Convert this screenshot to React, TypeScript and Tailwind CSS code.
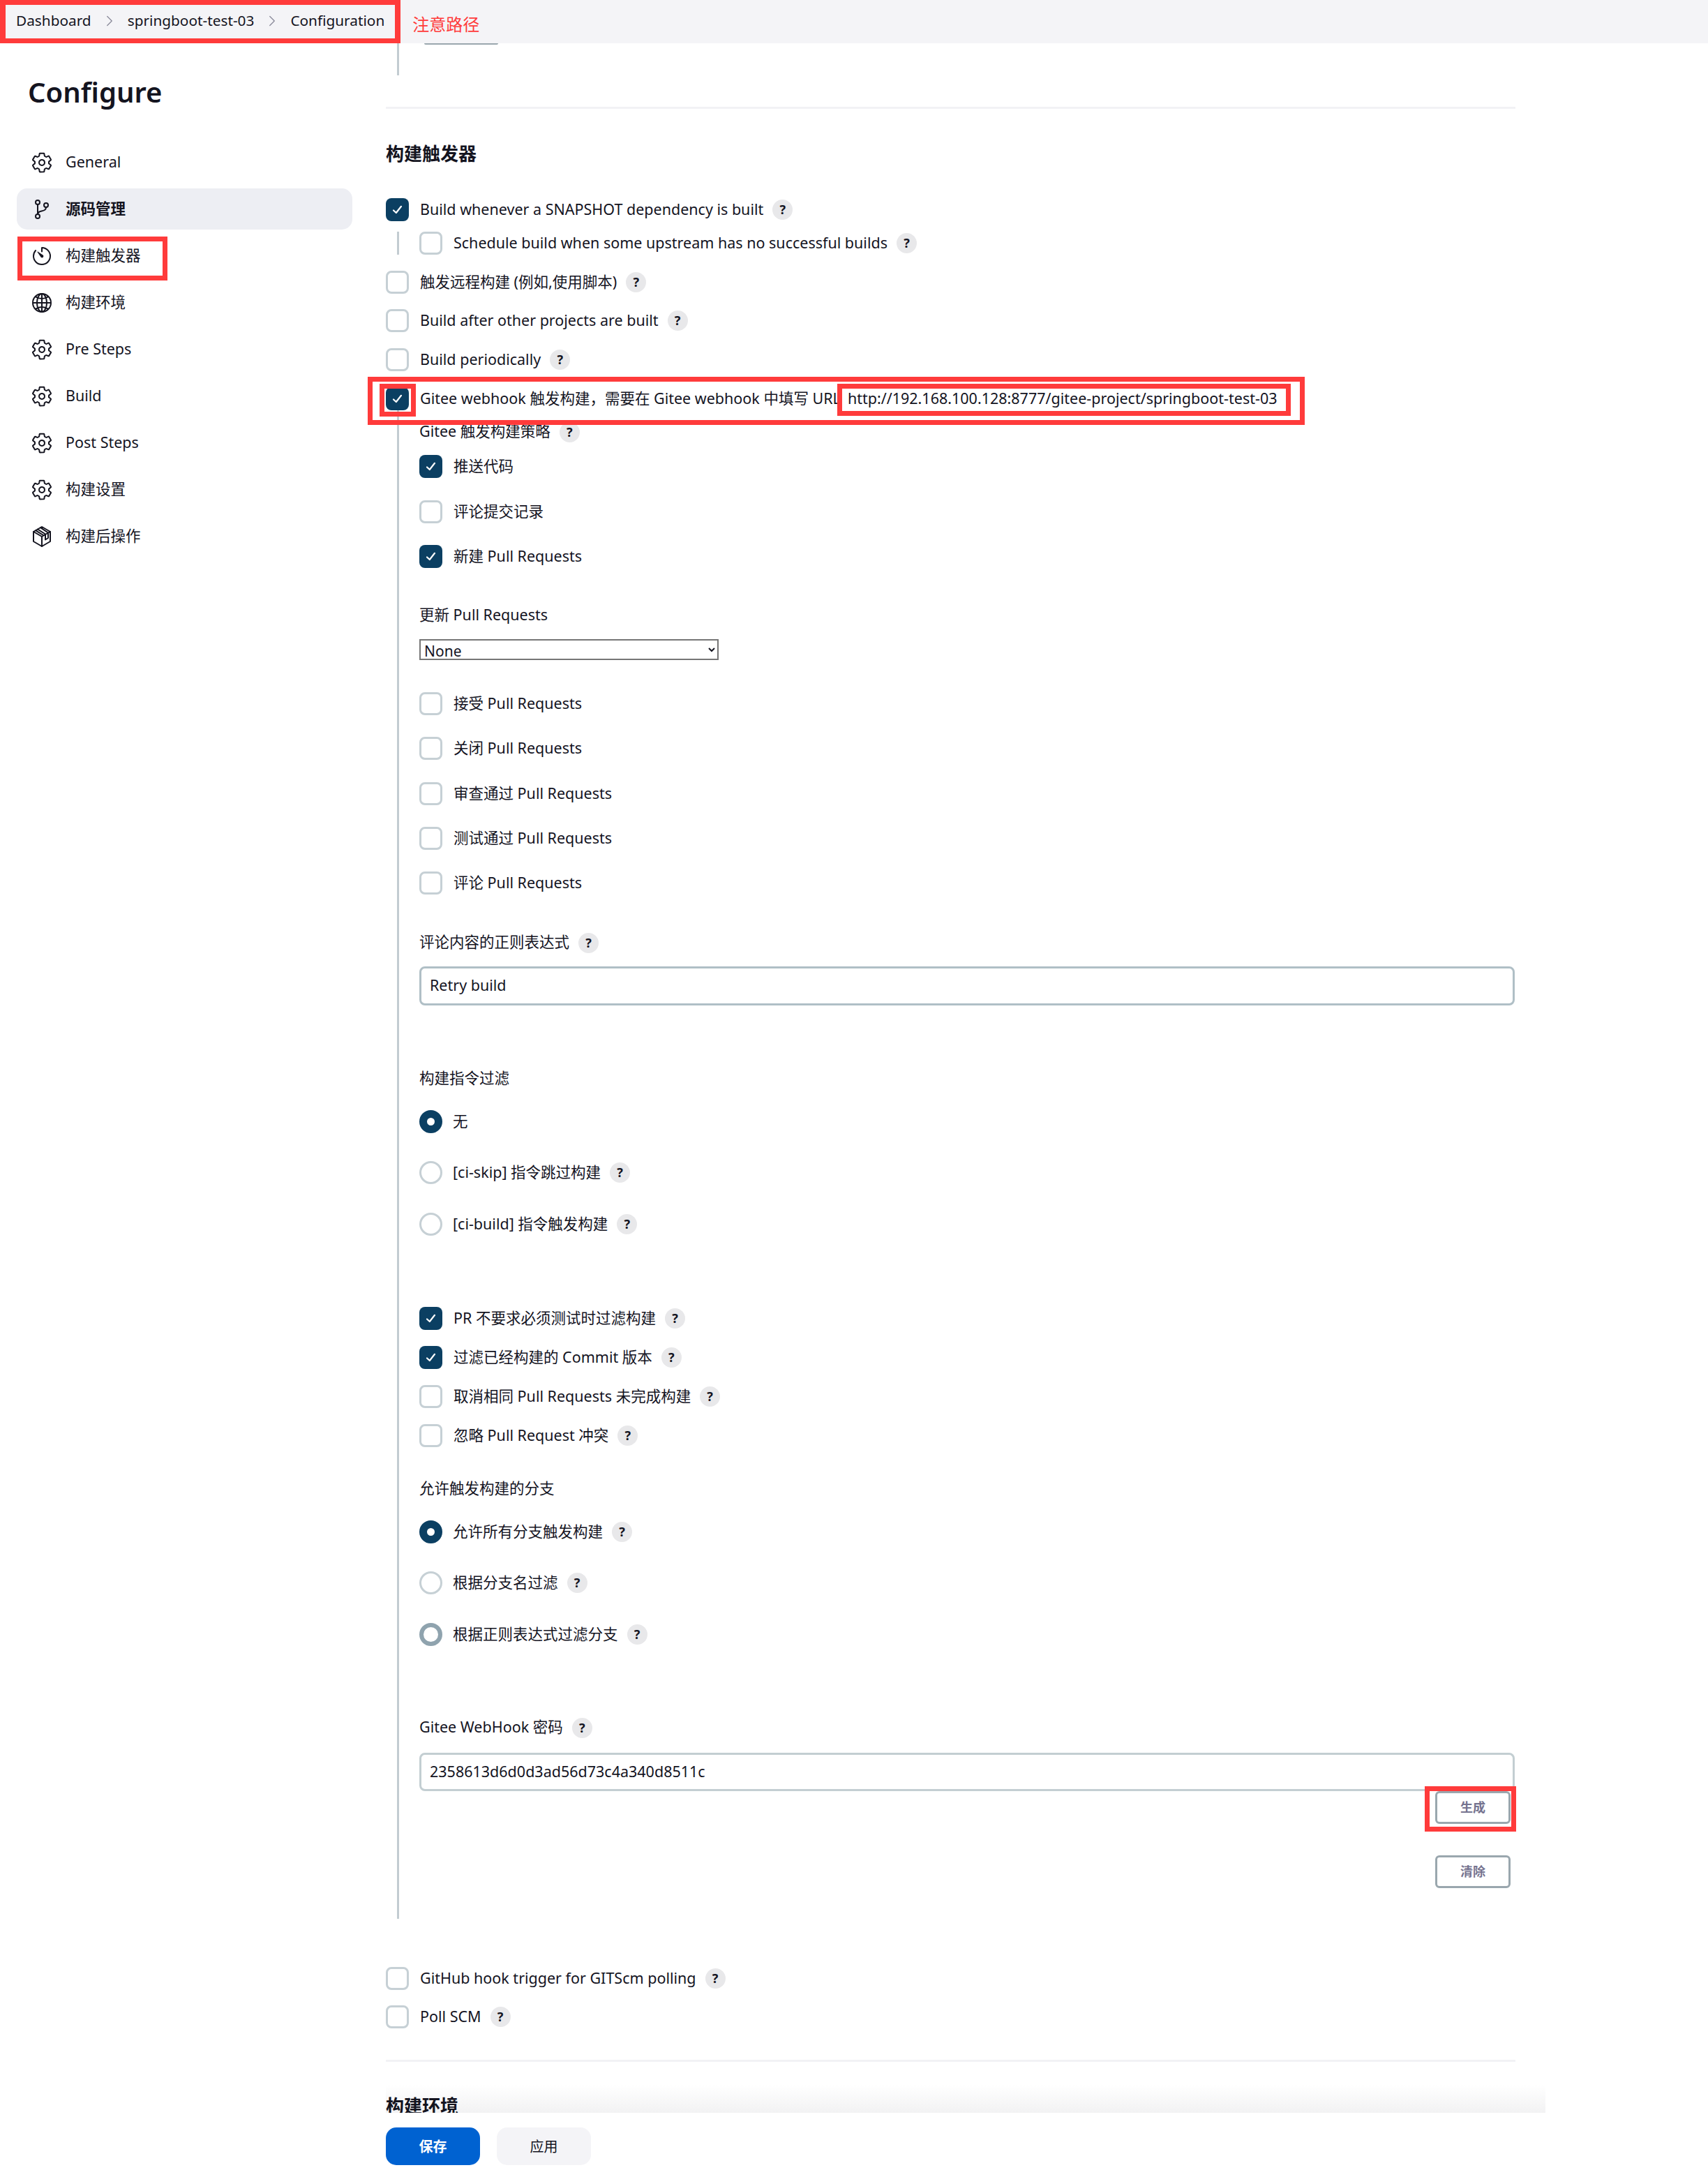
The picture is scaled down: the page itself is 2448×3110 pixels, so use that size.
import React from "react";
import { ChevronRight } from "lucide-react";
import {
  IoGitBranchOutline,
  IoGlobeOutline,
  IoSettingsOutline,
  IoTimerOutline,
} from "react-icons/io5";

function BoxIcon({ size, className }: { size?: number; className?: string }) {
  return (
    <svg width={size} height={size} viewBox="0 0 32 32" fill="none" stroke="currentColor" strokeWidth="2" strokeLinejoin="round" strokeLinecap="round" className={className}>
      <path d="M16 2 L28 9 V23 L16 30 L4 23 V9 Z" />
      <path d="M4 9 L16 16 L28 9 M16 16 V30" />
      <path d="M10 5.5 L21 12.5 V20.5 L25 18 V10.5 L14 3.2" />
      <path d="M7 7.2 L18 14" />
    </svg>
  );
}

const navItems: { label: string; icon: React.ComponentType<any>; active?: boolean }[] = [
  { label: "General", icon: IoSettingsOutline },
  { label: "源码管理", icon: IoGitBranchOutline, active: true },
  { label: "构建触发器", icon: IoTimerOutline },
  { label: "构建环境", icon: IoGlobeOutline },
  { label: "Pre Steps", icon: IoSettingsOutline },
  { label: "Build", icon: IoSettingsOutline },
  { label: "Post Steps", icon: IoSettingsOutline },
  { label: "构建设置", icon: IoSettingsOutline },
  { label: "构建后操作", icon: BoxIcon },
];

function Help() {
  return (
    <span className="ml-[13px] flex h-[29px] w-[29px] shrink-0 items-center justify-center rounded-full bg-[#e8e8ea] text-[18px] font-bold text-[#14141f]">
      ?
    </span>
  );
}

function Tick() {
  return (
    <span className="flex h-[33px] w-[33px] shrink-0 items-center justify-center rounded-[8px] bg-[#0b3f62]">
      <svg width="17" height="17" viewBox="0 0 17 17" fill="none">
        <path d="M3 9.5 L6.8 13 L14 3.8" stroke="white" strokeWidth="2.2" strokeLinecap="round" strokeLinejoin="round" />
      </svg>
    </span>
  );
}

function Check({ label, on, help, className = "" }: { label: string; on?: boolean; help?: boolean; className?: string }) {
  return (
    <div className={`flex h-[33px] items-center ${className}`}>
      {on ? <Tick /> : <span className="h-[33px] w-[33px] shrink-0 rounded-[8px] border-[3px] border-[#c6d0d5] bg-white" />}
      <span className="ml-[16px] whitespace-nowrap pb-px">{label}</span>
      {help && <Help />}
    </div>
  );
}

function Radio({ label, on, hover, help, className = "" }: { label: string; on?: boolean; hover?: boolean; help?: boolean; className?: string }) {
  const ring = on
    ? "border-[11px] border-[#0b3f62]"
    : hover
      ? "border-[6px] border-[#8fa3ae]"
      : "border-[3px] border-[#c6d0d5]";
  return (
    <div className={`flex h-[33px] items-center ${className}`}>
      <span className={`h-[33px] w-[33px] shrink-0 rounded-full bg-white ${ring}`} />
      <span className="ml-[15px] whitespace-nowrap pb-px">{label}</span>
      {help && <Help />}
    </div>
  );
}

function FieldLabel({ label, help, className = "" }: { label: string; help?: boolean; className?: string }) {
  return (
    <div className={`flex h-[30px] items-center ${className}`}>
      <span className="whitespace-nowrap pb-px">{label}</span>
      {help && <Help />}
    </div>
  );
}

function TextBox({ value, border, className = "" }: { value: string; border: string; className?: string }) {
  return (
    <div className={`flex w-[1570px] items-center rounded-[8px] border-[3px] bg-white pb-px pl-[12px] ${border} ${className}`}>
      {value}
    </div>
  );
}

function OutlineButton({ label, className = "" }: { label: string; className?: string }) {
  return (
    <div className={`ml-auto mr-[6px] flex h-[47px] w-[108px] items-center justify-center rounded-[6px] border-[3px] border-[#9aa7ae] bg-white text-[18px] font-bold text-[#75738f] ${className}`}>
      {label}
    </div>
  );
}

function Mark({ className }: { className: string }) {
  return <div className={`pointer-events-none absolute border-[#ff3b3b] ${className}`} />;
}

export default function App() {
  return (
    <div className="relative flex h-[3110px] w-[2448px] flex-col overflow-hidden bg-white font-['Noto_Sans','Noto_Sans_CJK_SC',sans-serif] text-[21.5px] text-[#14141f]">
      {/* breadcrumb */}
      <header className="flex h-[62px] shrink-0 items-center bg-[#f4f4f7] pb-[3px] pl-[23px] text-[20.8px]">
        <span>Dashboard</span>
        <ChevronRight size={26} strokeWidth={1.2} className="mx-[13px] text-[#8a8a99]" />
        <span>springboot-test-03</span>
        <ChevronRight size={26} strokeWidth={1.2} className="mx-[13px] text-[#8a8a99]" />
        <span>Configuration</span>
        <span className="ml-[40px] mt-[10px] text-[24px] text-[#ff3b3b]">注意路径</span>
      </header>

      <div className="relative flex min-h-0 flex-1">
        <aside className="w-[553px] shrink-0 pl-[24px]">
          <h1 className="ml-[16px] mt-[40px] text-[40px] font-semibold leading-[60px]">Configure</h1>
          <nav className="mt-[41px] w-[481px]">
            {navItems.map(({ label, icon: Icon, active }) => (
              <div
                key={label}
                className={`mb-[8px] flex h-[59px] items-center rounded-[15px] pl-[20px] ${active ? "bg-[#edeef3] font-bold" : ""}`}
              >
                <Icon size={32} strokeWidth={1.5} className="shrink-0 text-[#14141f]" />
                <span className="ml-[18px]">{label}</span>
              </div>
            ))}
          </nav>
        </aside>

        <main className="relative min-w-0 flex-1 overflow-hidden">
          <div className="pointer-events-none absolute bottom-0 left-[-20px] h-[40px] w-[1682px] bg-gradient-to-b from-transparent to-[#f2f2f3]" />
          <div className="relative w-[1619px]">
            <div className="ml-[16px] h-[46px] border-l-[3px] border-[#c3ccd1] pl-[36px]">
              <div className="h-[2px] w-[106px] rounded-b bg-[#9aa7ae]" />
            </div>
            <div className="mt-[45px] h-[3px] bg-[#f2f2f5]" />
            <h2 className="mt-[44px] text-[26px] font-bold leading-[40px]">构建触发器</h2>

            <Check className="mt-[44px]" label="Build whenever a SNAPSHOT dependency is built" on help />
            <div className="ml-[16px] mt-[15px] border-l-[3px] border-[#c3ccd1] pl-[29px]">
              <Check label="Schedule build when some upstream has no successful builds" help />
            </div>
            <Check className="mt-[23px]" label="触发远程构建 (例如,使用脚本)" help />
            <Check className="mt-[22px]" label="Build after other projects are built" help />
            <Check className="mt-[23px]" label="Build periodically" help />

            <div className="mt-[23px] flex h-[33px] items-center">
              <Tick />
              <span className="ml-[16px] whitespace-nowrap pb-px">Gitee webhook 触发构建，需要在 Gitee webhook 中填写 URL</span>
              <span className="ml-[10px] whitespace-nowrap pb-px">http://192.168.100.128:8777/gitee-project/springboot-test-03</span>
            </div>

            <div className="ml-[16px] border-l-[3px] border-[#c3ccd1] pb-[44px] pl-[29px]">
              <FieldLabel className="box-content pt-[16px]" label="Gitee 触发构建策略" help />
              <Check className="mt-[18px]" label="推送代码" on />
              <Check className="mt-[32px]" label="评论提交记录" />
              <Check className="mt-[31px]" label="新建 Pull Requests" on />
              <FieldLabel className="mt-[53px]" label="更新 Pull Requests" />
              <select className="mt-[19px] block h-[30px] w-[429px] border-2 border-[#767676] bg-white py-0 pl-[1px] text-[21px] leading-none">
                <option>None</option>
              </select>
              <Check className="mt-[46px]" label="接受 Pull Requests" />
              <Check className="mt-[31px]" label="关闭 Pull Requests" />
              <Check className="mt-[32px]" label="审查通过 Pull Requests" />
              <Check className="mt-[31px]" label="测试通过 Pull Requests" />
              <Check className="mt-[31px]" label="评论 Pull Requests" />
              <FieldLabel className="mt-[54px]" label="评论内容的正则表达式" help />
              <TextBox className="mt-[19px] h-[56px]" border="border-[#b0bfc6]" value="Retry build" />
              <FieldLabel className="mt-[90px]" label="构建指令过滤" />
              <Radio className="mt-[30px]" label="无" on />
              <Radio className="mt-[40px]" label="[ci-skip] 指令跳过构建" help />
              <Radio className="mt-[41px]" label="[ci-build] 指令触发构建" help />
              <Check className="mt-[102px]" label="PR 不要求必须测试时过滤构建" on help />
              <Check className="mt-[23px]" label="过滤已经构建的 Commit 版本" on help />
              <Check className="mt-[23px]" label="取消相同 Pull Requests 未完成构建" help />
              <Check className="mt-[23px]" label="忽略 Pull Request 冲突" help />
              <FieldLabel className="mt-[45px]" label="允许触发构建的分支" />
              <Radio className="mt-[30px]" label="允许所有分支触发构建" on help />
              <Radio className="mt-[40px]" label="根据分支名过滤" help />
              <Radio className="mt-[41px]" label="根据正则表达式过滤分支" hover help />
              <FieldLabel className="mt-[102px]" label="Gitee WebHook 密码" help />
              <TextBox className="mt-[21px] h-[55px]" border="border-[#c3ced2]" value="2358613d6d0d3ad56d73c4a340d8511c" />
              <div className="flex w-[1570px] flex-col">
                <OutlineButton label="生成" />
                <OutlineButton className="mt-[45px]" label="清除" />
              </div>
            </div>

            <Check className="mt-[69px]" label="GitHub hook trigger for GITScm polling" help />
            <Check className="mt-[22px]" label="Poll SCM" help />
            <div className="mt-[45px] h-[3px] bg-[#f2f2f5]" />
            <h2 className="mt-[43px] text-[26px] font-bold leading-[40px]">构建环境</h2>
          </div>
        </main>
      </div>

      <footer className="flex h-[82px] shrink-0 gap-[24px] bg-white pl-[553px] pt-[21px] text-[20px]">
        <div className="flex h-[54px] w-[135px] items-center justify-center rounded-[15px] bg-[#0062d1] pt-px font-bold text-white">保存</div>
        <div className="flex h-[54px] w-[135px] items-center justify-center rounded-[15px] bg-[#f4f4f7] pt-px">应用</div>
      </footer>

      {/* hand-drawn annotation boxes on top of the screenshot */}
      <Mark className="left-0 top-0 h-[62px] w-[574px] border-x-[8px] border-y-[7px]" />
      <Mark className="left-[25px] top-[339px] h-[63px] w-[215px] border-[7px]" />
      <Mark className="left-[527px] top-[540px] h-[69px] w-[1343px] border-[7px]" />
      <Mark className="left-[544px] top-[550px] h-[47px] w-[52px] border-[7px]" />
      <Mark className="left-[1200px] top-[550px] h-[46px] w-[650px] border-[7px]" />
      <Mark className="left-[2042px] top-[2560px] h-[65px] w-[131px] border-[7px]" />
    </div>
  );
}
